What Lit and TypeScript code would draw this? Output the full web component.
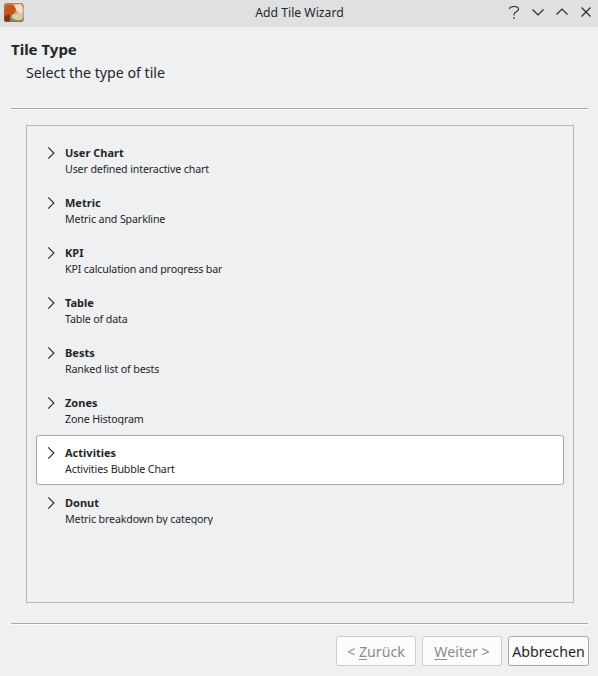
import { LitElement, html, css, svg } from "lit";
import { customElement } from "lit/decorators.js";
import { classMap } from "lit/directives/class-map.js";

interface TileType {
  name: string;
  description: string;
  active?: boolean;
}

const TILE_TYPES: TileType[] = [
  { name: "User Chart", description: "User defined interactive chart" },
  { name: "Metric", description: "Metric and Sparkline" },
  { name: "KPI", description: "KPI calculation and progress bar" },
  { name: "Table", description: "Table of data" },
  { name: "Bests", description: "Ranked list of bests" },
  { name: "Zones", description: "Zone Histogram" },
  { name: "Activities", description: "Activities Bubble Chart", active: true },
  { name: "Donut", description: "Metric breakdown by category" },
];

const WINDOW_CONTROLS = [
  svg`<path d="M4.500 6C4.500 4.300 6 3.500 9 3.500s4.500 1 4.500 2.700C13.500 9 9 8.500 9 11.500v1"/><path d="M8.300 15h1.400" stroke-width="1.400"/>`,
  svg`<path d="M3.500 6.500L9 12l5.500-5.500"/>`,
  svg`<path d="M3.500 11.500L9 6l5.500 5.500"/>`,
  svg`<path d="M4.500 4.500l9 9M13.500 4.500l-9 9"/>`,
];

@customElement("app-root")
export class AppRoot extends LitElement {
  static styles = css`
    :host {
      display: flex;
      flex-direction: column;
      box-sizing: border-box;
      width: 598px;
      height: 676px;
      background: #eff0f1;
      color: #232629;
      font-family: "Noto Sans", sans-serif;
      overflow: hidden;
    }
    .titlebar {
      display: grid;
      grid-template-columns: 1fr auto 1fr;
      align-items: center;
      height: 27px;
      flex: none;
      background: #dee0e2;
      font-size: 12.2px;
      line-height: 18px;
    }
    .title { padding: 0 0 2px 1px; }
    .logo { display: block; width: 20px; height: 20px; margin: 0 0 3px 4px; }
    .controls { display: flex; justify-content: flex-end; gap: 6px; padding: 0 3px 3px 0; }
    .controls svg { width: 18px; height: 18px; }
    .controls svg, .arrow {
      display: block;
      fill: none;
      stroke: #232629;
      stroke-width: 1.1;
    }
    .header { flex: none; height: 81px; padding: 12px 11px 0; box-sizing: border-box; }
    .heading { margin: 0; font-size: 15px; line-height: 21px; font-weight: 700; }
    .subheading { margin: 2px 0 0 15px; font-size: 14.2px; line-height: 21px; }
    .rule { flex: none; height: 1px; margin: 0 10px 0 11px; background: #a6a8ab; border-bottom: 1px solid #fff; }
    .list {
      flex: none;
      box-sizing: border-box;
      width: 548px;
      height: 478px;
      margin: 15px 0 20px 26px;
      padding: 9px;
      border: 1px solid #b4b6b9;
    }
    .tile {
      display: flex;
      box-sizing: border-box;
      height: 50px;
      padding: 9px 9px 0;
      border: 1px solid transparent;
      border-radius: 3px;
    }
    .active { background: #fff; border-color: #a6a8ab; }
    .arrow { width: 10px; height: 16px; margin-right: 9px; flex: none; }
    .name { font-size: 11px; line-height: 16px; font-weight: 700; }
    /* The label box is shorter than its line, so descenders are cut at the bottom. */
    .description { font-size: 10.67px; letter-spacing: -0.14px; line-height: 17px; height: 14px; overflow: hidden; }
    .buttons { display: flex; justify-content: flex-end; gap: 6px; padding: 11px 9px 0 0; }
    button {
      box-sizing: border-box;
      width: 80px;
      height: 30px;
      padding: 2px 0 0;
      border: 1px solid #a6a8ab;
      border-radius: 3px;
      background: #fcfcfc;
      color: #232629;
      font: 14.2px/26px "Noto Sans", sans-serif;
      white-space: nowrap;
    }
    button:disabled { border-color: #cacccf; color: #898b8d; }
    .cancel { width: 81px; }
    .mnemonic { text-decoration: underline; text-underline-offset: 2px; text-decoration-thickness: 1px; text-decoration-skip-ink: none; }
  `;

  render() {
    return html`
      <header class="titlebar">
        <svg class="logo" viewBox="0 0 20 20">
          <defs>
            <clipPath id="frame"><rect y="1" width="19.500" height="19" rx="3" /></clipPath>
            <linearGradient id="sky" x2="0" y2="1">
              <stop stop-color="#c98a60" /><stop offset="1" stop-color="#7a4128" />
            </linearGradient>
          </defs>
          <g clip-path="url(#frame)">
            <rect width="20" height="20" fill="url(#sky)" />
            <path d="M9 0h11v13H9z" fill="#e2a475" />
            <path d="M11 3l5-1 4 5v5l-5-1-4-4z" fill="#f3dcc0" />
            <path d="M2 4l3-1 4 0 3 4-1 4-3 2-2 3-5 0z" fill="#c4551c" />
            <path d="M0 15l5-3 3 9H0z" fill="#7e3519" />
            <path d="M6 15h14v6H6z" fill="#8f8558" />
            <path d="M7 14q3-3 5-2 6-2 8 0v4q-3 3-7 2-4 0-6-4z" fill="#d6cfa4" />
          </g>
          <rect x=".5" y="1.500" width="18.500" height="18" rx="2.500" fill="none" stroke="#8b6a58" stroke-opacity=".5" />
        </svg>
        <span class="title">Add Tile Wizard</span>
        <div class="controls">
          ${WINDOW_CONTROLS.map((icon) => html`<svg viewBox="0 0 18 18">${icon}</svg>`)}
        </div>
      </header>
      <section class="header">
        <h1 class="heading">Tile Type</h1>
        <p class="subheading">Select the type of tile</p>
      </section>
      <div class="rule"></div>
      <main class="list">
        ${TILE_TYPES.map(
          (tile) => html`
            <div class=${classMap({ tile: true, active: !!tile.active })}>
              <svg class="arrow" viewBox="0 0 10 16"><path d="M2.200 2.300L7.900 8l-5.700 5.700" /></svg>
              <div>
                <div class="name">${tile.name}</div>
                <div class="description">${tile.description}</div>
              </div>
            </div>
          `,
        )}
      </main>
      <div class="rule"></div>
      <footer class="buttons">
        <button disabled>&lt; <span class="mnemonic">Z</span>urück</button>
        <button disabled><span class="mnemonic">W</span>eiter &gt;</button>
        <button class="cancel">Abbrechen</button>
      </footer>
    `;
  }
}
